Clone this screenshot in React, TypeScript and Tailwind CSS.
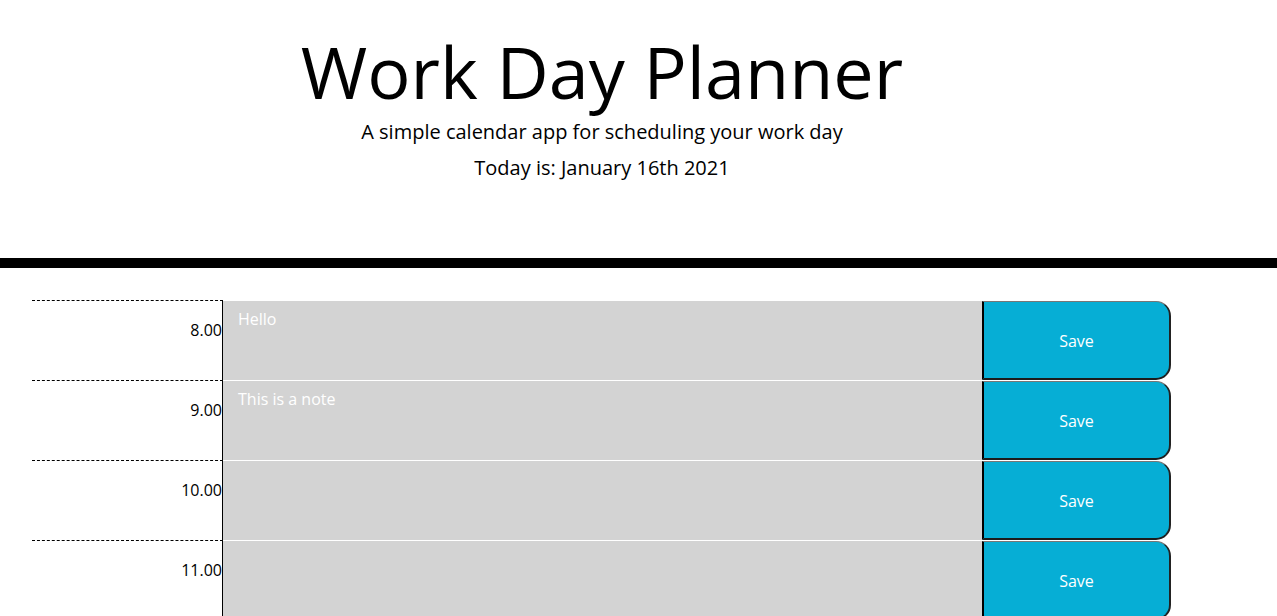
const hours = [
  { label: "8.00", note: "Hello" },
  { label: "9.00", note: "This is a note" },
  { label: "10.00", note: "" },
  { label: "11.00", note: "" },
  { label: "12.00", note: "" },
  { label: "13.00", note: "" },
  { label: "14.00", note: "" },
  { label: "15.00", note: "" },
  { label: "16.00", note: "" },
  { label: "17.00", note: "" },
];

function TimeBlock({ label, note }: { label: string; note: string }) {
  return (
    <div className="flex h-[80px]">
      <div className="w-[191px] shrink-0 border-t border-r border-dashed border-t-black border-r-black [border-right-style:solid] pt-[17px] text-right text-[16px] leading-[24px] text-black">
        {label}
      </div>
      <textarea
        defaultValue={note}
        className="w-[759px] shrink-0 resize-none border-t border-white bg-[#d3d3d3] pl-[15px] pt-[6px] text-[16px] leading-[24px] text-white outline-none"
      />
      <button className="mt-px w-[189px] shrink-0 rounded-r-[15px] border-t border-l-2 border-r-2 border-b-2 border-t-[#777777] border-l-black border-r-[#222222] border-b-[#1c1c1c] bg-[#06aed5] pt-[2px] text-[16px] text-white">
        Save
      </button>
    </div>
  );
}

export default function App() {
  return (
    <div className="min-h-screen bg-white font-['Open_Sans',sans-serif] text-black">
      <header className="border-b-[10px] border-black pt-[28px] pb-[75px]">
        <div className="ml-[32px] w-[1140px] text-center">
          <h1 className="text-[72px] font-normal leading-[86px]">Work Day Planner</h1>
          <p className="mt-[3px] text-[20px] leading-[30px]">A simple calendar app for scheduling your work day</p>
          <p className="mt-[6px] text-[20px] leading-[30px]">Today is: January 16th 2021</p>
        </div>
      </header>
      <main className="ml-[32px] mt-[32px] w-[1140px]">
        {hours.map((h) => (
          <TimeBlock key={h.label} label={h.label} note={h.note} />
        ))}
      </main>
    </div>
  );
}
